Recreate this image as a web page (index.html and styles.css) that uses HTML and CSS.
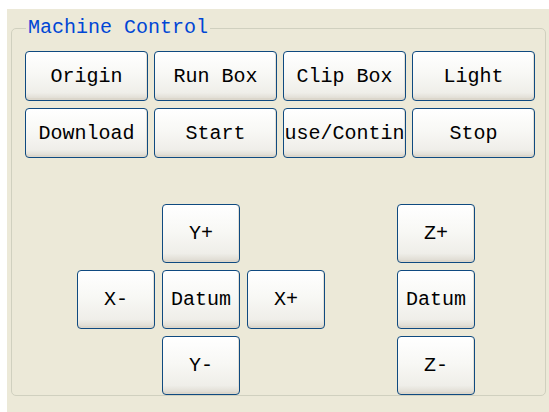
FILE: index.html
```html
<!DOCTYPE html>
<html lang="en">
<head>
    <meta charset="UTF-8">
    <title>Machine Control</title>
    <link rel="stylesheet" href="styles.css">
</head>
<body>
    <div class="panel">
        <fieldset class="group">
            <legend>Machine Control</legend>
            <div class="cmdGrid">
                <button class="btn">Origin</button>
                <button class="btn">Run Box</button>
                <button class="btn">Clip Box</button>
                <button class="btn">Light</button>
                <button class="btn">Download</button>
                <button class="btn">Start</button>
                <button class="btn"><span>Pause/Continue</span></button>
                <button class="btn">Stop</button>
            </div>
            <div class="jog">
                <div class="xyPad">
                    <button class="btn jogBtn yPlus">Y+</button>
                    <button class="btn jogBtn xMinus">X-</button>
                    <button class="btn jogBtn xyDatum">Datum</button>
                    <button class="btn jogBtn xPlus">X+</button>
                    <button class="btn jogBtn yMinus">Y-</button>
                </div>
                <div class="zPad">
                    <button class="btn jogBtn">Z+</button>
                    <button class="btn jogBtn">Datum</button>
                    <button class="btn jogBtn">Z-</button>
                </div>
            </div>
        </fieldset>
    </div>
</body>
</html>
```

FILE: styles.css
```css
*{
    box-sizing: border-box;
}
body{
    margin: 0;
    background-color: #ffffff;
    font-family: "Liberation Mono", monospace;
}
.panel{
    margin: 9px 0 0 7px;
    height: 403px;
    background-color: #ece9d8;
    padding: 9px 3px 6px 4px;
}
.group{
    margin: 0;
    padding: 13px 0 0 13px;
    height: 378px;
    border: 1px solid #d0d0bf;
    border-radius: 5px;
}
.group legend{
    margin-left: 1px;
    padding: 0 2px;
    font-size: 20px;
    line-height: 20px;
    color: #0046d5;
}
.cmdGrid{
    display: grid;
    grid-template-columns: repeat(4, 123px);
    grid-auto-rows: 50px;
    column-gap: 6px;
    row-gap: 7px;
}
.btn{
    display: flex;
    align-items: center;
    justify-content: center;
    overflow: hidden;
    white-space: nowrap;
    padding: 0;
    font-family: "Liberation Mono", monospace;
    font-size: 20px;
    color: #000000;
    border: 1px solid #0f4a80;
    border-radius: 4px;
    background: linear-gradient(to bottom, #ffffff 0%, #f8f8f5 45%, #efeee9 85%, #dcd8ce 100%);
    box-shadow: inset 0 -2px 0 #dcd7cc, inset -1px 0 0 #e4e0d6;
    cursor: pointer;
}
.btn span{
    flex-shrink: 0;
}
.jog{
    display: flex;
    gap: 72px;
    margin: 46px 0 0 52px;
}
.xyPad{
    display: grid;
    grid-template-columns: repeat(3, 78px);
    grid-template-rows: repeat(3, 59px);
    gap: 7px;
}
.zPad{
    display: grid;
    grid-template-columns: 78px;
    grid-template-rows: repeat(3, 59px);
    gap: 7px;
}
.yPlus{
    grid-column: 2;
    grid-row: 1;
}
.xMinus{
    grid-column: 1;
    grid-row: 2;
}
.xyDatum{
    grid-column: 2;
    grid-row: 2;
}
.xPlus{
    grid-column: 3;
    grid-row: 2;
}
.yMinus{
    grid-column: 2;
    grid-row: 3;
}
```
